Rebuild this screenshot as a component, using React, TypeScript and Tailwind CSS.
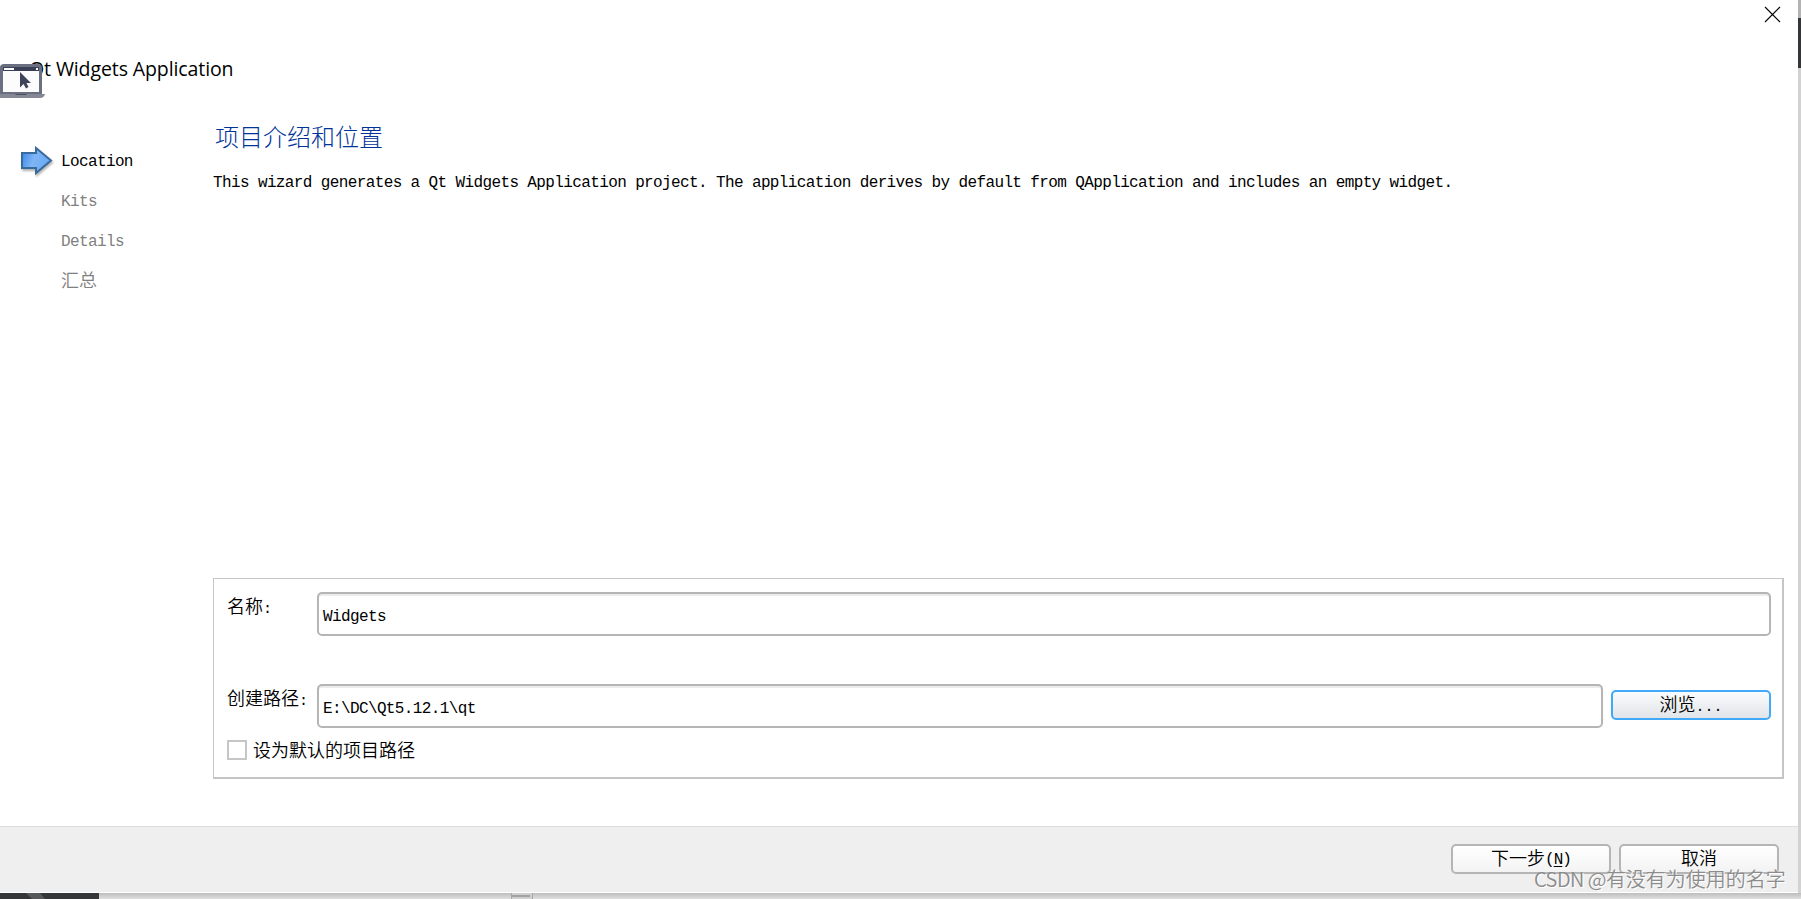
import type { ReactNode } from 'react';

const steps = [
  { label: 'Location', active: true },
  { label: 'Kits', active: false },
  { label: 'Details', active: false },
  { label: '汇总', active: false },
];

function LaptopIcon() {
  return (
    <svg className="absolute left-0 top-[63px]" width="46" height="36" viewBox="0 0 46 36">
      <path d="M0 4.5Q0 1 4 1H38Q42 1 42 5V31H0Z" fill="#6b7080" />
      <rect x="3" y="4" width="36" height="25" fill="#fcfcfc" />
      <rect x="3" y="4" width="36" height="4" fill="#3a4055" />
      <rect x="4" y="5" width="10" height="2" fill="#fff" />
      <rect x="36" y="5" width="2" height="2" fill="#fff" />
      <path d="M20 9V24.500L23.500 21L26 25.500L28.500 24L26.500 20H31Z" fill="#3f445b" />
      <path d="M0 31H45Q44 35 40 35H0Z" fill="#858795" />
      <path d="M15 31H27L26 32H16Z" fill="#4b5067" />
    </svg>
  );
}

function ArrowIcon() {
  return (
    <svg className="drop-shadow-[1px_2px_1px_rgba(0,0,0,0.3)]" width="34" height="30" viewBox="0 0 34 30">
      <defs>
        <linearGradient id="arrow" x1="0" x2="1" y1="0" y2="0.3">
          <stop offset="0" stopColor="#3684ea" />
          <stop offset="0.5" stopColor="#80b5f5" />
          <stop offset="1" stopColor="#6aa9f3" />
        </linearGradient>
      </defs>
      <path d="M2 7H16V2L31 14.500L16 27V22H2Z" fill="url(#arrow)" stroke="#396a9c" strokeWidth="2" />
    </svg>
  );
}

function Field({ value, className }: { value: string; className: string }) {
  return (
    <div
      className={`flex h-11 items-center rounded-[5px] border-2 border-[#b5b5b5] bg-white pl-1 pt-[5px] shadow-[inset_0_2px_0_#ececec] ${className}`}
    >
      <span className="text-[16px] tracking-[-0.62px]">{value}</span>
    </div>
  );
}

function Button({ children, className }: { children: ReactNode; className: string }) {
  return (
    <button
      className={`flex h-[30px] w-40 items-center justify-center rounded-[5px] border-2 bg-linear-to-b pt-px text-[18px] leading-none font-[350] ${className}`}
    >
      {children}
    </button>
  );
}

export default function App() {
  return (
    <div className="relative h-[899px] w-[1801px] overflow-hidden bg-[#d2d2d2] font-['Liberation_Mono','Noto_Sans_CJK_SC',monospace] text-black">
      {/* Windows peeking out behind the dialog */}
      <div className="absolute right-0 top-0 h-[18px] w-[3px] bg-[#b3b3b3]" />
      <div className="absolute right-0 top-[18px] h-[50px] w-[3px] bg-[#343536]" />
      <div className="absolute bottom-0 left-0 h-1.5 w-full bg-linear-to-b from-[#bdbdbd] to-[#e0e0e0]" />
      <svg className="absolute bottom-0 left-0" width="99" height="6">
        <rect width="99" height="6" fill="#343638" />
        <path d="M26 0H40L45 6H32Z" fill="#565859" />
      </svg>
      <div className="absolute bottom-0 left-[511px] h-1.5 w-[22px] border-x border-[#a6a6a6] bg-[#cfcfcf] pt-0.5">
        <div className="h-0.5 w-[18px] bg-[#a2a2a2]" />
      </div>

      <div className="relative flex h-[893px] w-[1798px] flex-col border-b border-white bg-white">
        <header className="flex h-[113px] shrink-0 justify-between">
          <h1 className="pl-[29px] pt-[55px] font-['Open_Sans',sans-serif] text-[19.5px] leading-[28px] tracking-[-0.1px]">
            Qt Widgets Application
          </h1>
          <svg className="mr-[17px] mt-[6px]" width="17" height="17" viewBox="0 0 17 17">
            <path d="M1 1L16 16M16 1L1 16" stroke="#000" strokeWidth="1.100" />
          </svg>
        </header>
        <LaptopIcon />

        <div className="flex grow">
          <nav className="flex w-[213px] flex-col pt-[36px]">
            {steps.map((s) => (
              <div key={s.label} className="flex h-10 items-center pb-4">
                <div className="w-[61px] shrink-0 pl-5">{s.active && <ArrowIcon />}</div>
                <span
                  className={
                    s.label === '汇总'
                      ? 'pt-px text-[18px] leading-6 font-[350] text-[#808080]'
                      : s.active
                        ? 'pt-0.5 text-[16px] leading-6 tracking-[-0.62px]'
                        : 'pt-0.5 text-[16px] leading-6 tracking-[-0.62px] text-[#808080]'
                  }
                >
                  {s.label}
                </span>
              </div>
            ))}
          </nav>

          <main className="flex w-[1571px] flex-col">
            <h2 className="mt-[11px] pl-0.5 text-[24px] leading-8 font-light text-[#003399]">项目介绍和位置</h2>
            <p className="mt-[15px] text-[16px] leading-6 tracking-[-0.62px] whitespace-nowrap">
              This wizard generates a Qt Widgets Application project. The application derives by default from
              QApplication and includes an empty widget.
            </p>

            <section className="mt-[383px] h-[201px] border-t border-r-2 border-b-2 border-l border-[#c5c5c5] pl-[13px] pt-[13px]">
              <div className="flex h-[92px]">
                <label className="w-[90px] pt-1 text-[18px] leading-6 font-[350]">
                  名称<span className="text-[15px]">:</span>
                </label>
                <Field value="Widgets" className="w-[1454px]" />
              </div>
              <div className="flex h-[56px]">
                <label className="w-[90px] pt-1 text-[18px] leading-6 font-[350]">
                  创建路径<span className="text-[15px]">:</span>
                </label>
                <Field value="E:\DC\Qt5.12.1\qt" className="w-[1286px]" />
                <div className="ml-2 pt-1.5">
                  <Button className="border-[#42a9f8] from-[#fafbfc] to-[#e1e5e9]">
                    浏览<span className="pt-1 text-[15px]">...</span>
                  </Button>
                </div>
              </div>
              <div className="flex h-5 items-center gap-[6px]">
                <div className="size-5 border-2 border-[#c6c6c6] bg-white" />
                <span className="pt-1 text-[18px] leading-5 font-[350]">设为默认的项目路径</span>
              </div>
            </section>
          </main>
        </div>

        <footer className="flex h-[66px] shrink-0 justify-end gap-2 border-t border-[#dddddd] bg-[#efefef] pr-[19px] pt-[17px]">
          <Button className="border-[#b5b5b5] from-white to-[#f3f3f3]">
            下一步
            <span className="text-[16px] tracking-[-1px]">
              (<span className="underline underline-offset-2">N</span>)
            </span>
          </Button>
          <Button className="border-[#b5b5b5] from-white to-[#f3f3f3]">取消</Button>
        </footer>
      </div>

      <div className="absolute left-[1534px] top-[864px] font-['Noto_Sans_CJK_SC',sans-serif] text-[20px] leading-[30px] font-[350] whitespace-nowrap text-[#8c8c8c] [text-shadow:1px_1px_0_#fff]">
        <span className="tracking-[-0.55px]">CSDN @</span>有没有为使用的名字
      </div>
    </div>
  );
}
